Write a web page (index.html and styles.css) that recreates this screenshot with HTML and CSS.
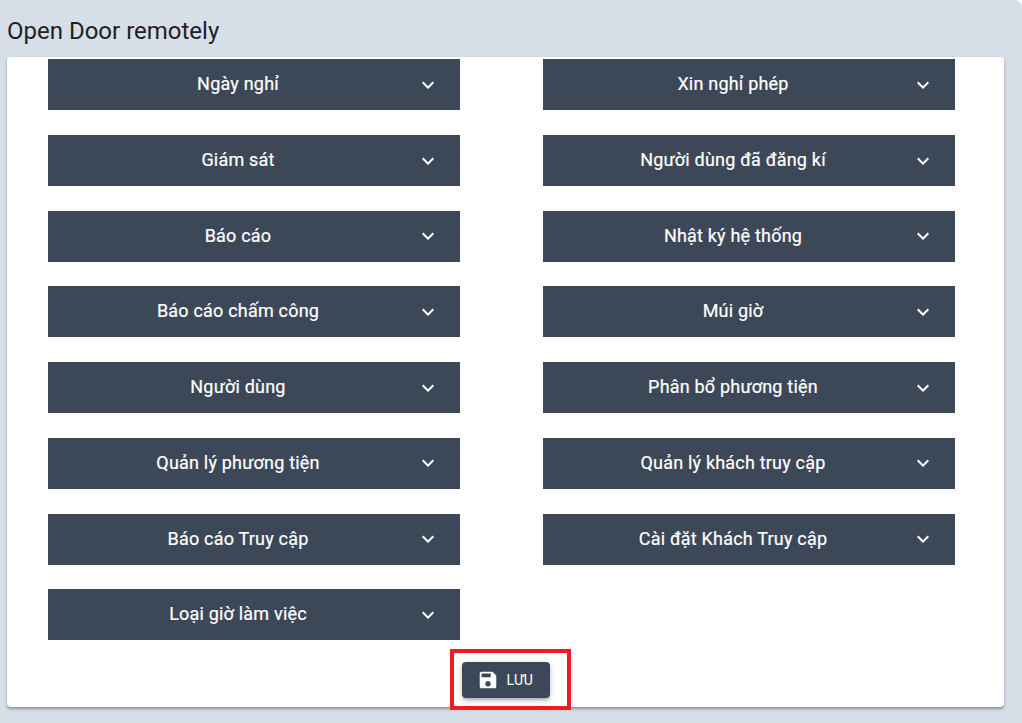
FILE: index.html
```html
<!DOCTYPE html>
<html lang="vi">
<head>
    <meta charset="UTF-8">
    <meta name="viewport" content="width=device-width, initial-scale=1.0">
    <title>Open Door remotely</title>
    <link rel="stylesheet" href="styles.css">
</head>
<body>
    <div class="page">
        <h1 class="page-title">Open Door remotely</h1>
        <div class="panel">
            <div class="groups">
                <div class="group"><span class="group-name">Ngày nghỉ</span><svg class="chevron" viewBox="0 0 24 24"><path d="M16.59 8.59L12 13.17 7.41 8.59 6 10l6 6 6-6z"/></svg></div>
                <div class="group"><span class="group-name">Xin nghỉ phép</span><svg class="chevron" viewBox="0 0 24 24"><path d="M16.59 8.59L12 13.17 7.41 8.59 6 10l6 6 6-6z"/></svg></div>
                <div class="group"><span class="group-name">Giám sát</span><svg class="chevron" viewBox="0 0 24 24"><path d="M16.59 8.59L12 13.17 7.41 8.59 6 10l6 6 6-6z"/></svg></div>
                <div class="group"><span class="group-name">Người dùng đã đăng kí</span><svg class="chevron" viewBox="0 0 24 24"><path d="M16.59 8.59L12 13.17 7.41 8.59 6 10l6 6 6-6z"/></svg></div>
                <div class="group"><span class="group-name">Báo cáo</span><svg class="chevron" viewBox="0 0 24 24"><path d="M16.59 8.59L12 13.17 7.41 8.59 6 10l6 6 6-6z"/></svg></div>
                <div class="group"><span class="group-name">Nhật ký hệ thống</span><svg class="chevron" viewBox="0 0 24 24"><path d="M16.59 8.59L12 13.17 7.41 8.59 6 10l6 6 6-6z"/></svg></div>
                <div class="group"><span class="group-name">Báo cáo chấm công</span><svg class="chevron" viewBox="0 0 24 24"><path d="M16.59 8.59L12 13.17 7.41 8.59 6 10l6 6 6-6z"/></svg></div>
                <div class="group"><span class="group-name">Múi giờ</span><svg class="chevron" viewBox="0 0 24 24"><path d="M16.59 8.59L12 13.17 7.41 8.59 6 10l6 6 6-6z"/></svg></div>
                <div class="group"><span class="group-name">Người dùng</span><svg class="chevron" viewBox="0 0 24 24"><path d="M16.59 8.59L12 13.17 7.41 8.59 6 10l6 6 6-6z"/></svg></div>
                <div class="group"><span class="group-name">Phân bổ phương tiện</span><svg class="chevron" viewBox="0 0 24 24"><path d="M16.59 8.59L12 13.17 7.41 8.59 6 10l6 6 6-6z"/></svg></div>
                <div class="group"><span class="group-name">Quản lý phương tiện</span><svg class="chevron" viewBox="0 0 24 24"><path d="M16.59 8.59L12 13.17 7.41 8.59 6 10l6 6 6-6z"/></svg></div>
                <div class="group"><span class="group-name">Quản lý khách truy cập</span><svg class="chevron" viewBox="0 0 24 24"><path d="M16.59 8.59L12 13.17 7.41 8.59 6 10l6 6 6-6z"/></svg></div>
                <div class="group"><span class="group-name">Báo cáo Truy cập</span><svg class="chevron" viewBox="0 0 24 24"><path d="M16.59 8.59L12 13.17 7.41 8.59 6 10l6 6 6-6z"/></svg></div>
                <div class="group"><span class="group-name">Cài đặt Khách Truy cập</span><svg class="chevron" viewBox="0 0 24 24"><path d="M16.59 8.59L12 13.17 7.41 8.59 6 10l6 6 6-6z"/></svg></div>
                <div class="group"><span class="group-name">Loại giờ làm việc</span><svg class="chevron" viewBox="0 0 24 24"><path d="M16.59 8.59L12 13.17 7.41 8.59 6 10l6 6 6-6z"/></svg></div>
            </div>
            <div class="actions">
                <button class="save-button">
                    <svg class="save-icon" viewBox="0 0 24 24"><path d="M17 3H5c-1.11 0-2 .9-2 2v14c0 1.1.89 2 2 2h14c1.1 0 2-.9 2-2V7l-4-4zm-5 16c-1.66 0-3-1.34-3-3s1.34-3 3-3 3 1.34 3 3-1.34 3-3 3zm3-10H5V5h10v4z"/></svg>
                    Lưu
                </button>
                <div class="highlight"></div>
            </div>
        </div>
    </div>
</body>
</html>
```

FILE: styles.css
```css
html, body {
    margin: 0;
    padding: 0;
    background-color: #fff;
}
body {
    font-family: Roboto, "Noto Sans", sans-serif;
}
.page {
    width: 1022px;
    height: 723px;
    padding: 0 0 0 7px;
    box-sizing: border-box;
    background-color: #d6dee8;
    border-radius: 0 8px 0 0;
    overflow: hidden;
}
.page-title {
    margin: 0;
    padding-top: 17px;
    height: 57px;
    box-sizing: border-box;
    font-size: 24px;
    line-height: 28px;
    font-weight: 400;
    color: #212121;
}
.panel {
    width: 997px;
    height: 650px;
    padding: 2.3px 49px 0 41px;
    box-sizing: border-box;
    background-color: #fff;
    border-radius: 4px;
    box-shadow: 0 2px 3px rgba(0, 0, 0, 0.35);
}
.groups {
    display: grid;
    grid-template-columns: 412px 412px;
    column-gap: 83px;
    row-gap: 24.72px;
}
.group {
    display: flex;
    align-items: center;
    height: 51px;
    padding: 0 20px 0 12px;
    background-color: #3c4858;
    color: #fff;
}
.group-name {
    flex: 1;
    margin-bottom: 2px;
    text-align: center;
    font-size: 18px;
    font-weight: 400;
    letter-spacing: 0.2px;
    -webkit-text-stroke: 0.2px #fff;
}
.chevron {
    width: 24px;
    height: 24px;
    fill: #fff;
}
.actions {
    position: relative;
    display: flex;
    justify-content: center;
    padding-top: 22px;
}
.save-button {
    display: flex;
    align-items: center;
    gap: 8px;
    height: 36px;
    width: 88px;
    padding: 0 15px;
    margin-left: 8px;
    box-sizing: border-box;
    border: none;
    border-radius: 4px;
    background-color: #3c4858;
    color: #fff;
    font-family: inherit;
    font-size: 14px;
    font-weight: 400;
    text-transform: uppercase;
    box-shadow: 0 3px 3px -2px rgba(0, 0, 0, 0.2), 0 3px 4px rgba(0, 0, 0, 0.14), 0 1px 8px rgba(0, 0, 0, 0.12);
}
.save-icon {
    width: 22px;
    height: 22px;
    fill: #fff;
}
/* red frame around the save button */
.highlight {
    position: absolute;
    left: 402px;
    top: 9px;
    width: 121px;
    height: 61px;
    box-sizing: border-box;
    border: 4px solid #ed1c24;
}
```
